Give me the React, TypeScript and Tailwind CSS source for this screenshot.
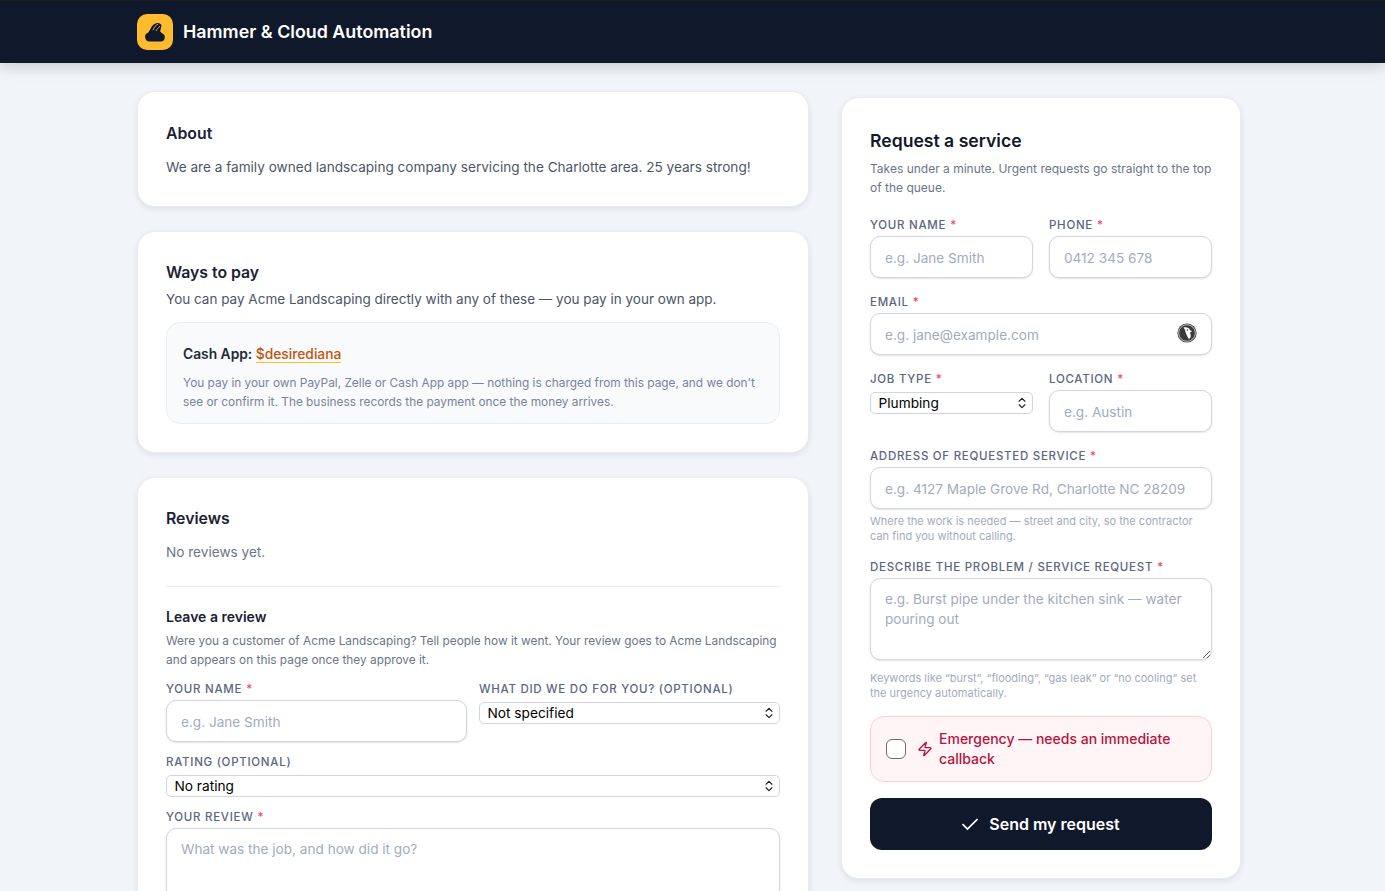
import { ChevronsUpDown, Zap } from "lucide-react";

const labelCls = "block text-[11.5px] leading-[18px] font-medium tracking-[0.72px] uppercase text-[#5b6680]";
const fieldCls =
  "block w-full rounded-[10px] border border-[#cfd5e3] bg-white px-[14px] text-[13.6px] text-[#1f2937] placeholder:text-[#a3abc0] shadow-[0_1px_2px_rgba(15,23,42,0.12)] outline-none";
const inputCls = `${fieldCls} h-[42px] pt-[2px]`;
const textareaCls = `${fieldCls} mt-[2px] resize-y py-[10px] leading-[20px]`;
const cardCls =
  "rounded-[18px] border border-[#e9edf3] bg-white shadow-[0_2px_6px_rgba(15,23,42,0.09)]";
const hintCls = "mt-[5px] text-[11px] leading-[15px] text-[#a3abc0]";

function Label({ text, required }: { text: string; required?: boolean }) {
  return (
    <label className={labelCls}>
      {text}
      {required && <span className="ml-[4px] text-[#f43f5e]">*</span>}
    </label>
  );
}

function SelectBox({ value }: { value: string }) {
  return (
    <div className="relative mt-[4px]">
      <select className="block h-[22px] w-full appearance-none rounded-[5px] border border-[#cfd5e3] bg-white pl-[7.5px] text-[13.7px] leading-[20px] text-black outline-none">
        <option>{value}</option>
      </select>
      <ChevronsUpDown className="pointer-events-none absolute top-[4px] right-[4px] size-[14px] text-[#222]" strokeWidth={2} />
    </div>
  );
}

function Logo() {
  return (
    <div className="flex size-[36px] items-center justify-center rounded-[10px] bg-[#fdbb2d]">
      <svg viewBox="0 0 20 20" className="size-[20px]">
        <path
          d="M4.6 19.5a4.6 4.6 0 0 1-1.2-9A5.8 5.8 0 0 1 14 9.3a3.2 3.2 0 0 1 2.8 2 4.2 4.2 0 0 1-.8 8.2z"
          fill="#10182b"
        />
        <path d="M5 9C5.5 5 8.5 1.8 12 1c2-.4 4 .6 4.5 2.5L15 10z" fill="#10182b" />
        <path d="M8 8.2C8.8 5.6 10.6 3.4 13 2.2M11 9c.7-1.8 2.2-3.4 4-4.6" stroke="#fdbb2d" strokeWidth="0.9" fill="none" />
      </svg>
    </div>
  );
}

function DuckBadge() {
  return (
    <svg viewBox="0 0 20 20" className="absolute top-[10px] right-[15px] size-[20px]">
      <circle cx="10" cy="10" r="9.6" fill="#3a3a3a" />
      <circle cx="10" cy="10" r="8.3" fill="none" stroke="#fff" strokeWidth="0.7" />
      <path d="M6.5 4.6c2.8-1.2 6 .2 6.6 2.6l2.2 1-2.3 1c.3 1.2.9 2.6.7 4.3-.1 1.2-.8 2-1.8 2.5-1.4-2.6-3.1-5-3.6-7.8-.2-1.4-1.1-2.4-1.8-3.6z" fill="#fff" />
      <circle cx="10.4" cy="7" r="0.8" fill="#3a3a3a" />
    </svg>
  );
}

export default function App() {
  return (
    <div className="h-[891px] overflow-hidden bg-[#f1f5f9] font-['Inter',sans-serif] antialiased">
      <header className="flex h-[63px] items-center gap-[10px] border-t border-[#1c1a22] bg-[#10182b] pl-[137px] shadow-[0_4px_14px_rgba(15,23,42,0.18)]">
        <Logo />
        <h1 className="text-[17.85px] leading-[28px] font-semibold text-white">Hammer &amp; Cloud Automation</h1>
      </header>

      <main className="flex items-start gap-[32px] pt-[28px] pl-[137px]">
        <div className="flex w-[672px] flex-col gap-[24px]">
          <section className={`${cardCls} h-[116px] px-[28px] pt-[31px]`}>
            <h2 className="text-[15.8px] leading-[22px] font-semibold text-[#1a2233]">About</h2>
            <p className="mt-[11px] text-[13.6px] leading-[22px] text-[#4b5568]">
              We are a family owned landscaping company servicing the Charlotte area. 25 years strong!
            </p>
          </section>

          <section className={`${cardCls} h-[222px] px-[28px] pt-[30px]`}>
            <h2 className="text-[15.8px] leading-[22px] font-semibold text-[#1a2233]">Ways to pay</h2>
            <p className="mt-[4px] text-[13.5px] leading-[22px] text-[#4b5568]">
              You can pay Acme Landscaping directly with any of these — you pay in your own app.
            </p>
            <div className="mt-[12px] h-[102px] rounded-[14px] border border-[#e9edf3] bg-[#f8fafc] px-[16px] pt-[21px]">
              <p className="text-[13.8px] leading-[20px] font-semibold text-[#1f2937]">
                Cash App:{" "}
                <a className="border-b border-[#fbbf24] font-medium text-[#c2540f]">$desirediana</a>
              </p>
              <p className="mt-[10px] text-[11.85px] leading-[19px] text-[#7a8499]">
                You pay in your own PayPal, Zelle or Cash App app — nothing is charged from this page, and we don&apos;t
                see or confirm it. The business records the payment once the money arrives.
              </p>
            </div>
          </section>

          <section className={`${cardCls} h-[560px] px-[28px] pt-[30px]`}>
            <h2 className="text-[15.8px] leading-[22px] font-semibold text-[#1a2233]">Reviews</h2>
            <p className="mt-[11px] text-[13.6px] leading-[22px] text-[#6b7588]">No reviews yet.</p>
            <div className="mt-[23px] border-t border-[#e9edf3] pt-[20px]">
              <h3 className="text-[14px] leading-[20px] font-semibold text-[#1a2233]">Leave a review</h3>
              <p className="mt-[5px] text-[11.85px] leading-[19px] text-[#6b7588]">
                Were you a customer of Acme Landscaping? Tell people how it went. Your review goes to Acme Landscaping
                and appears on this page once they approve it.
              </p>
              <div className="mt-[10px] grid grid-cols-2 gap-x-[12px]">
                <div>
                  <Label text="Your name" required />
                  <input className={`${inputCls} mt-[2px]`} placeholder="e.g. Jane Smith" />
                </div>
                <div>
                  <Label text="What did we do for you? (optional)" />
                  <SelectBox value="Not specified" />
                </div>
              </div>
              <div className="mt-[11px]">
                <Label text="Rating (optional)" />
                <SelectBox value="No rating" />
              </div>
              <div className="mt-[11px]">
                <Label text="Your review" required />
                <textarea className={`${textareaCls} h-[110px]`} placeholder="What was the job, and how did it go?" />
              </div>
            </div>
          </section>
        </div>

        <section className={`${cardCls} mt-[6px] h-[782px] w-[400px] px-[28px] pt-[30px]`}>
          <h2 className="text-[17.6px] leading-[26px] font-semibold text-[#10182b]">Request a service</h2>
          <p className="mt-[5px] text-[12px] leading-[19px] text-[#6b7588]">
            Takes under a minute. Urgent requests go straight to the top of the queue.
          </p>

          <div className="mt-[19px] grid grid-cols-[163px_163px] gap-x-[16px]">
            <div>
              <Label text="Your name" required />
              <input className={`${inputCls} mt-[2px]`} placeholder="e.g. Jane Smith" />
            </div>
            <div>
              <Label text="Phone" required />
              <input className={`${inputCls} mt-[2px]`} placeholder="0412 345 678" />
            </div>
          </div>

          <div className="mt-[15px]">
            <Label text="Email" required />
            <div className="relative mt-[2px]">
              <input className={inputCls} placeholder="e.g. jane@example.com" />
              <DuckBadge />
            </div>
          </div>

          <div className="mt-[15px] grid grid-cols-[163px_163px] gap-x-[16px]">
            <div>
              <Label text="Job type" required />
              <SelectBox value="Plumbing" />
            </div>
            <div>
              <Label text="Location" required />
              <input className={`${inputCls} mt-[2px]`} placeholder="e.g. Austin" />
            </div>
          </div>

          <div className="mt-[15px]">
            <Label text="Address of requested service" required />
            <input className={`${inputCls} mt-[2px]`} placeholder="e.g. 4127 Maple Grove Rd, Charlotte NC 28209" />
            <p className={hintCls}>Where the work is needed — street and city, so the contractor can find you without calling.</p>
          </div>

          <div className="mt-[14px]">
            <Label text="Describe the problem / service request" required />
            <textarea
              className={`${textareaCls} h-[82px]`}
              placeholder="e.g. Burst pipe under the kitchen sink — water pouring out"
            />
            <p className={`${hintCls} mt-[11px]`}>
              Keywords like “burst”, “flooding”, “gas leak” or “no cooling” set the urgency automatically.
            </p>
          </div>

          <label className="mt-[15px] flex h-[66px] items-center rounded-[14px] border border-[#fecdd3] bg-[#fff5f6] pl-[15px]">
            <span className="size-[20px] rounded-[6px] border border-[#6b6b6b] bg-white" />
            <Zap className="ml-[11px] size-[16px] text-[#be123c]" strokeWidth={2} />
            <span className="ml-[6px] w-[250px] text-[14px] leading-[20px] font-medium text-[#b4163f]">
              Emergency — needs an immediate callback
            </span>
          </label>

          <button
            type="button"
            className="mt-[16px] flex h-[52px] w-full items-center justify-center gap-[11px] rounded-[12px] bg-[#10182b] text-[16px] font-semibold text-white"
          >
            <svg viewBox="0 0 16 16" className="size-[16px]" fill="none" stroke="currentColor" strokeWidth="1.7">
              <path d="M0.5 8 5.5 13 15.5 3" />
            </svg>
            Send my request
          </button>
        </section>
      </main>
    </div>
  );
}
